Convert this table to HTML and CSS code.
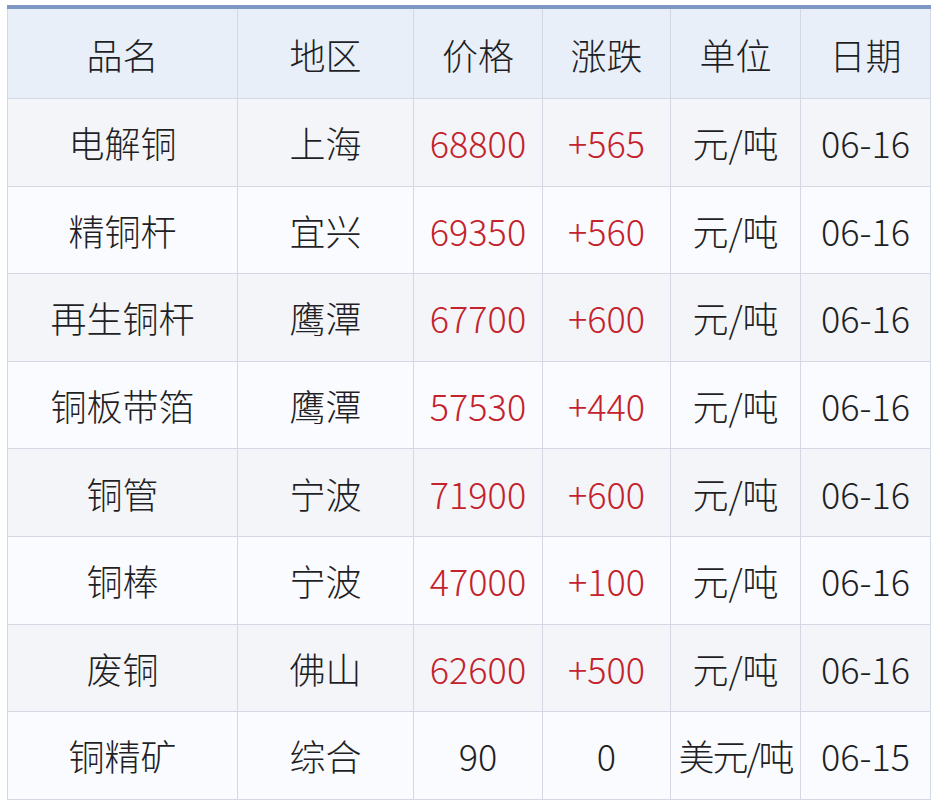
FILE: index.html
```html
<!DOCTYPE html>
<html lang="zh-CN">
<head>
<meta charset="utf-8">
<title>铜价</title>
<link rel="stylesheet" href="styles.css">
</head>
<body>
<div class="wrap">
<table class="price">
<colgroup>
<col class="c1"><col class="c2"><col class="c3"><col class="c4"><col class="c5"><col class="c6">
</colgroup>
<thead>
<tr><th>品名</th><th>地区</th><th>价格</th><th>涨跌</th><th>单位</th><th>日期</th></tr>
</thead>
<tbody>
<tr><td>电解铜</td><td>上海</td><td class="up">68800</td><td class="up">+565</td><td>元/吨</td><td>06-16</td></tr>
<tr><td>精铜杆</td><td>宜兴</td><td class="up">69350</td><td class="up">+560</td><td>元/吨</td><td>06-16</td></tr>
<tr><td>再生铜杆</td><td>鹰潭</td><td class="up">67700</td><td class="up">+600</td><td>元/吨</td><td>06-16</td></tr>
<tr><td>铜板带箔</td><td>鹰潭</td><td class="up">57530</td><td class="up">+440</td><td>元/吨</td><td>06-16</td></tr>
<tr><td>铜管</td><td>宁波</td><td class="up">71900</td><td class="up">+600</td><td>元/吨</td><td>06-16</td></tr>
<tr><td>铜棒</td><td>宁波</td><td class="up">47000</td><td class="up">+100</td><td>元/吨</td><td>06-16</td></tr>
<tr><td>废铜</td><td>佛山</td><td class="up">62600</td><td class="up">+500</td><td>元/吨</td><td>06-16</td></tr>
<tr><td>铜精矿</td><td>综合</td><td>90</td><td>0</td><td class="tight">美元/吨</td><td>06-15</td></tr>
</tbody>
</table>
</div>
</body>
</html>
```
FILE: styles.css
```css
html, body {
  margin: 0;
  padding: 0;
  background: #ffffff;
}
.wrap {
  padding: 5px 6px 0 7px;
}
.price {
  border-collapse: collapse;
  table-layout: fixed;
  width: 923px;
  font-family: "Noto Sans CJK SC", "Noto Sans", sans-serif;
  font-size: 36px;
  font-weight: 300;
  color: #1f1f26;
  border-top: 4px solid #7f97c6;
}
.c1 { width: 230px; }
.c2 { width: 176px; }
.c3 { width: 129px; }
.c4 { width: 128px; }
.c5 { width: 130px; }
.c6 { width: 130px; }
.price th, .price td {
  border: 1px solid #d3d8e2;
  text-align: center;
  vertical-align: middle;
  padding: 0;
  white-space: nowrap;
  overflow: visible;
}
.price th {
  height: 89px;
  font-weight: 300;
  background: #e9eff9;
}
.price td {
  height: 86.6px;
  background: #fafbfe;
}
.price tbody tr:nth-child(odd) td {
  background: #f3f5f9;
}
.price td.up {
  color: #c4222c;
}
.price td.tight {
  letter-spacing: -2px;
}
```
